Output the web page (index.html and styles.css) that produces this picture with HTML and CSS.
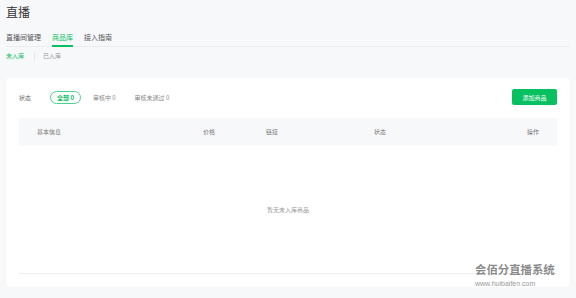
FILE: index.html
```html
<!DOCTYPE html>
<html lang="zh-CN">
<head>
<meta charset="UTF-8">
<meta name="viewport" content="width=device-width,initial-scale=1">
<title>直播 - 商品库</title>
<link rel="stylesheet" href="styles.css">
</head>
<body>
<div class="page">
  <h1 class="title">直播</h1>

  <!-- Main tabs -->
  <div class="tabs">
    <div class="tab">直播间管理</div>
    <div class="tab active">商品库</div>
    <div class="tab">接入指南</div>
  </div>

  <!-- Sub tabs -->
  <div class="subtabs">
    <div class="subtab active">未入库</div>
    <div class="sep"></div>
    <div class="subtab">已入库</div>
  </div>

  <div class="card">
    <div class="toolbar">
      <div class="filters">
        <span class="label">状态</span>
        <span class="pill active">全部 0</span>
        <span class="pill">审核中 0</span>
        <span class="pill">审核未通过 0</span>
      </div>
      <button class="addBtn">添加商品</button>
    </div>

    <div class="table">
      <div class="thead">
        <div>基本信息</div>
        <div>价格</div>
        <div>链接</div>
        <div>状态</div>
        <div class="right">操作</div>
      </div>
      <div class="empty">暂无未入库商品</div>
    </div>
  </div>
</div>

<!-- Watermark -->
<div class="mark">
  <div class="markName">会佰分直播系统</div>
  <div class="markUrl">www.huibaifen.com</div>
</div>
</body>
</html>
```

FILE: styles.css
```css
body {
  margin: 0;
  background: #f7f8fa;
  font-family: "Noto Sans CJK SC", "Noto Sans", sans-serif;
  color: #333;
}

.page {
  padding: 0 6px;
}

.title {
  margin: 0;
  padding-top: 5px;
  font-size: 12px;
  line-height: 14px;
  font-weight: normal;
  color: #333;
}

/* Main tabs */
.tabs {
  display: flex;
  gap: 11px;
  border-bottom: 1px solid #ebedf0;
}
.tab {
  padding-top: 13px;
  padding-bottom: 3px;
  font-size: 7px;
  line-height: 10px;
  border-bottom: 2px solid transparent;
  margin-bottom: -1px;
  color: #555;
}
.tab.active {
  color: #07c160;
  border-bottom-color: #07c160;
}

/* Sub tabs */
.subtabs {
  display: flex;
  align-items: center;
  margin-top: 4px;
  font-size: 6px;
  line-height: 10px;
}
.subtab {
  color: #999;
}
.subtab.active {
  color: #07c160;
}
.sep {
  width: 1px;
  height: 7px;
  background: #e5e5e5;
  margin: 0 8px 0 10px;
}

/* Card */
.card {
  margin-top: 17px;
  background: #fff;
  border-radius: 3px;
  box-shadow: 0 1px 2px rgba(0,0,0,0.04);
  padding: 11px 13px 13px;
}

.toolbar {
  display: flex;
  justify-content: space-between;
  align-items: center;
  height: 16px;
}
.filters {
  display: flex;
  align-items: center;
  font-size: 6px;
}
.label {
  color: #666;
  margin-right: 19px;
}
.pill {
  height: 13px;
  line-height: 11px;
  box-sizing: border-box;
  padding: 0 6px;
  margin-right: 5px;
  border: 1px solid transparent;
  border-radius: 7px;
  color: #888;
}
.pill.active {
  border-color: #4fd08b;
  color: #07c160;
  font-weight: bold;
}
.addBtn {
  width: 45px;
  height: 16px;
  padding: 0;
  border: none;
  border-radius: 2px;
  background: #07c160;
  color: #fff;
  font-family: inherit;
  font-size: 6px;
}

/* Table */
.table {
  margin-top: 13px;
  border-bottom: 1px solid #ebedf0;
}
.thead {
  display: grid;
  grid-template-columns: 166px 63px 108px 1fr 1fr;
  align-items: center;
  height: 27px;
  padding: 0 18px;
  background: #f7f8fa;
  font-size: 6px;
  color: #777;
}
.thead .right {
  text-align: right;
}
.empty {
  height: 128px;
  display: flex;
  justify-content: center;
  align-items: center;
  font-size: 6px;
  color: #999;
}

/* Watermark */
.mark {
  position: absolute;
  left: 475px;
  top: 261px;
  font-family: "Noto Sans CJK SC", sans-serif;
}
.markName {
  font-size: 11.4px;
  line-height: 16px;
  font-weight: bold;
  color: rgba(100,100,100,0.75);
}
.markUrl {
  font-family: "Liberation Sans", Arial, sans-serif;
  font-size: 7px;
  line-height: 10px;
  margin-top: 2px;
  color: #999;
}
```
